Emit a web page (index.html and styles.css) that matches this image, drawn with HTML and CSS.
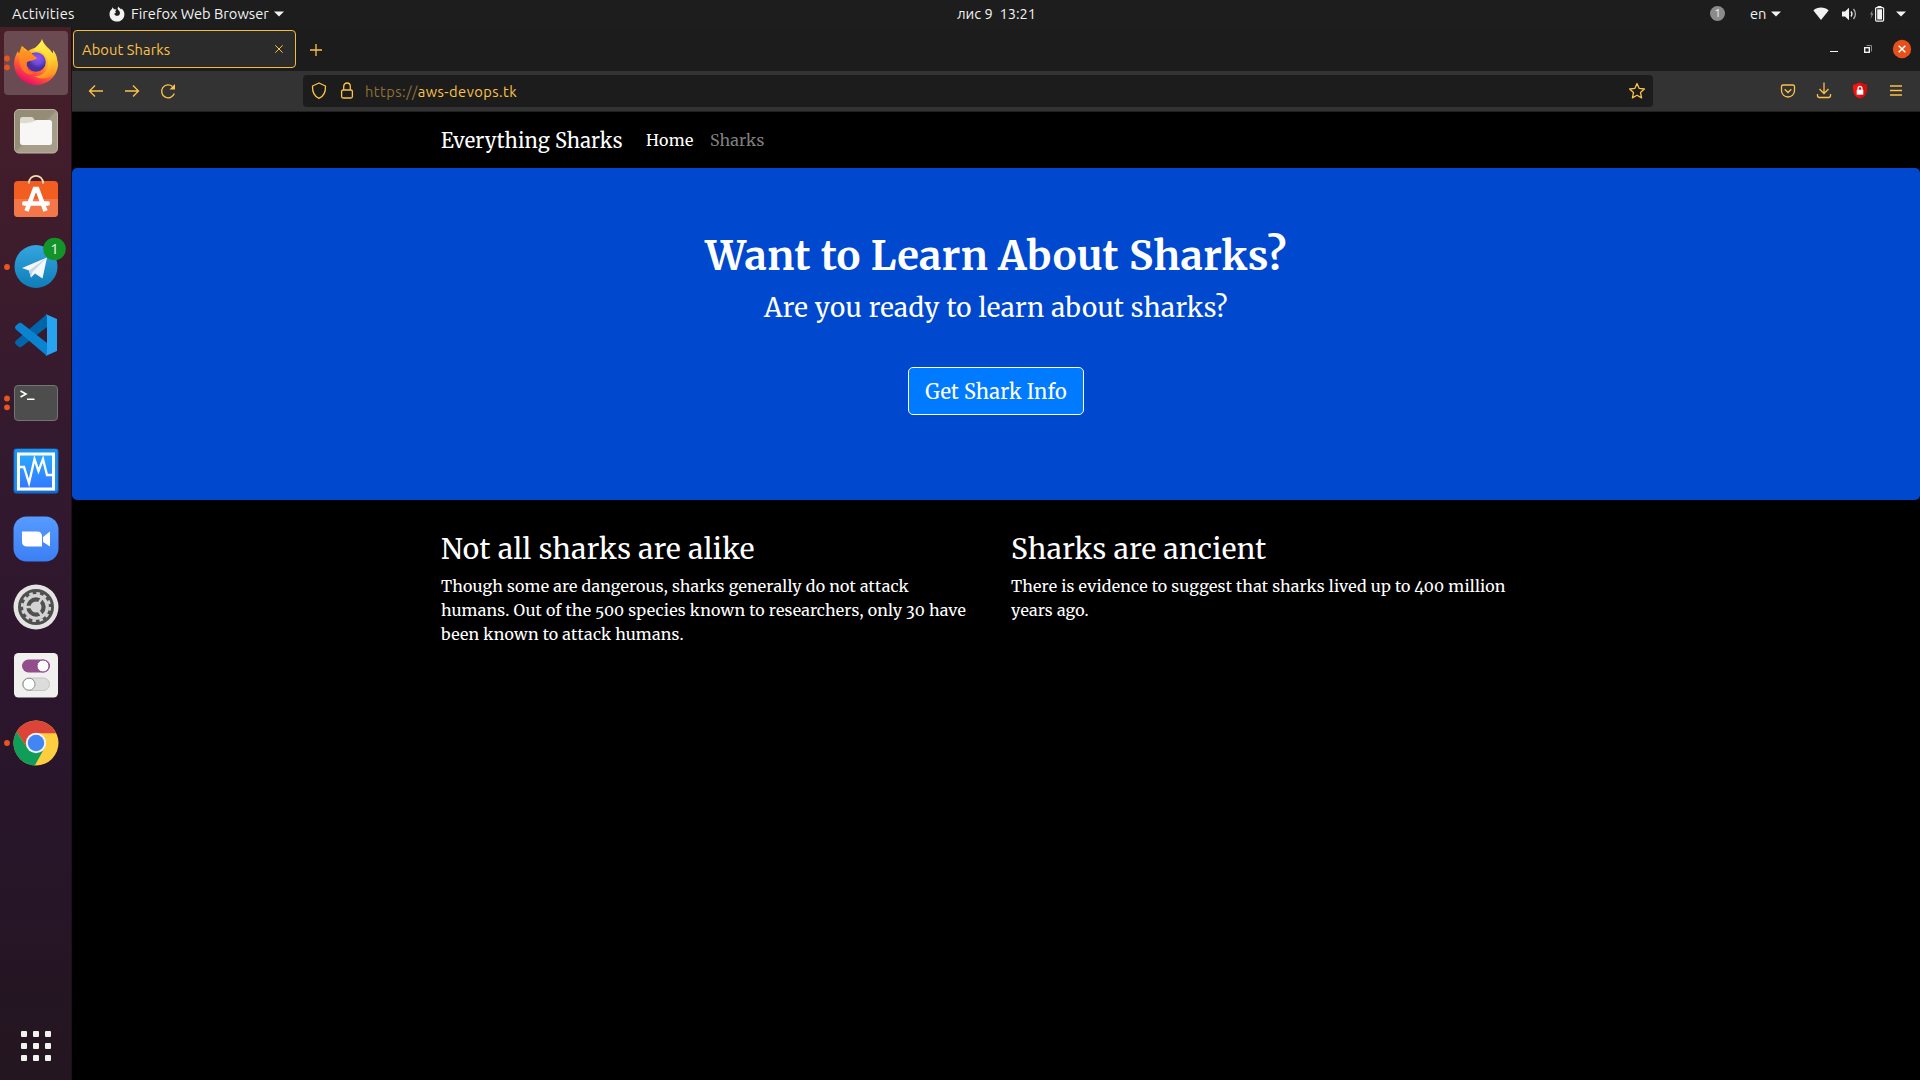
FILE: index.html
```html
<!DOCTYPE html>
<html lang="en">
<head>
<meta charset="utf-8">
<title>About Sharks</title>
<link rel="stylesheet" href="styles.css">
</head>
<body>
<div class="desktop">
  <header class="topbar">
    <span class="activities">Activities</span>
    <svg class="app-icon" width="16" height="16" viewBox="0 0 16 16"><path d="M3.6 1.2 5 3.2 7.6 3.4 6.2 5.2 7 7 5.2 7.4C5.6 10 9.5 10.7 10.7 8.2 11.4 6.600 10.700 5 9.500 4.200L8.600 2.700 9.200 0.500C10 2 11.400 2.200 12.200 3.600L12.700 2.400C14.600 4.200 15.600 6.400 15.400 8.700 15 13 12 15.600 8 15.600 3.800 15.600.5 12.400.5 8.200.5 5.600 1.600 4.200 2.700 3.300Z" fill="#f2f2f2"/></svg>
    <span class="app-name">Firefox Web Browser</span>
    <svg class="caret" width="10" height="6" viewBox="0 0 10 6"><path d="M0 .5h10L5 5.500z" fill="#f2f2f2"/></svg>
    <span class="clock">лис 9&nbsp; 13:21</span>
    <span class="notice">1</span>
    <span class="lang">en</span>
    <svg class="caret lang-caret" width="10" height="6" viewBox="0 0 10 6"><path d="M0 .5h10L5 5.500z" fill="#f2f2f2"/></svg>
    <svg class="wifi" width="16" height="14" viewBox="0 0 16 14"><path d="M.4 3.400C4.500-.3 11.500-.3 15.600 3.400L8 13z" fill="#f2f2f2"/></svg>
    <svg class="sound" width="16" height="14" viewBox="0 0 16 14"><path d="M0 4.500h3L7 .8v12.400L3 9.500H0z" fill="#f2f2f2"/><path d="M9 4.500q2 2.500 0 5" fill="none" stroke="#f2f2f2" stroke-width="1.300"/><path d="M11.500 2q3.800 5 0 10" fill="none" stroke="#b0b0b0" stroke-width="1.300"/></svg>
    <svg class="battery" width="16" height="16" viewBox="0 0 16 16"><path d="M3.500 4 1 8.500h1.500L1.500 13 4.500 7.500H3z" fill="#8b8b8b"/><path d="M8.500 0h4v1.500h-4z" fill="#f2f2f2"/><rect x="6.600" y="1.600" width="8" height="13.500" rx="1" fill="none" stroke="#f2f2f2" stroke-width="1.200"/><path d="M8.200 3.300h4.800v10.200H8.200z" fill="#f2f2f2"/></svg>
    <svg class="caret sys-caret" width="10" height="6" viewBox="0 0 10 6"><path d="M0 .5h10L5 5.500z" fill="#f2f2f2"/></svg>
  </header>

  <div class="workspace">
    <aside class="dock">
      <div class="dock-apps">
        <div class="dock-item">
          <svg viewBox="-36 -34 72 68">
            <defs>
              <linearGradient id="fx-body" x1=".8" y1=".1" x2=".25" y2="1"><stop offset="0" stop-color="#ffe63c"/><stop offset=".35" stop-color="#ffab26"/><stop offset=".65" stop-color="#ff4e3b"/><stop offset="1" stop-color="#e4006f"/></linearGradient>
              <linearGradient id="fx-flame" x1=".4" y1="0" x2=".6" y2="1"><stop offset="0" stop-color="#fff44f"/><stop offset=".55" stop-color="#ffd232"/><stop offset="1" stop-color="#ff8a1c"/></linearGradient>
              <radialGradient id="fx-globe" cx=".6" cy=".3"><stop offset="0" stop-color="#9b50f0"/><stop offset=".6" stop-color="#6b4cdc"/><stop offset="1" stop-color="#4a2fa0"/></radialGradient>
              <linearGradient id="fx-head" x1="0" y1="0" x2="0" y2="1"><stop offset="0" stop-color="#ffa01e"/><stop offset="1" stop-color="#ff6a2a"/></linearGradient>
            </defs>
            <rect x="-32" y="-32" width="64" height="64" rx="4" fill="#fff" fill-opacity=".2"/>
            <path d="M-14-17-8-12C-3-15 5-18 10-14 18-11 22-4 22 2 21 14 11 22 0 22-12 22-22 12-22 0-22-4-20-9-18-12L-17-9Z" fill="url(#fx-body)"/>
            <path d="M6-24C4-18-1-17-2-12 7-14 13-7 12 2 11 10 4 14-2 13 8 19 20 14 21 1 22-5 20-9 17-13L17-9C14-15 8-17 6-24Z" fill="url(#fx-flame)"/>
            <circle cx="0" cy="-1" r="9.800" fill="url(#fx-globe)"/>
            <path d="M-14-17-11-12-6-12-4-9 1-5C-1-2-6-3-9-1-11 5-7 9-2 10-6 14-14 10-16 1-17-6-17-12-14-17Z" fill="url(#fx-head)"/>
            <g fill="#e95420"><circle cx="-29" cy="-4.500" r="2.900"/><circle cx="-29" cy="4.300" r="2.900"/></g>
          </svg>
        </div>
        <div class="dock-item">
          <svg viewBox="-36 -34 72 68">
            <defs><linearGradient id="files-bg" x1="0" y1="0" x2="1" y2="1"><stop offset=".48" stop-color="#958c78"/><stop offset=".52" stop-color="#a69e8a"/></linearGradient></defs>
            <rect x="-21.500" y="-21.500" width="43" height="43.500" rx="4.500" fill="url(#files-bg)" stroke="#bdb6a5"/>
            <path d="M-16-11.500q0-2.500 2.500-2.500h9q2 0 3 3v4h-14.500z" fill="#dedace"/>
            <path d="M-16-8q9 .5 12.500-1 2-2 4-2h13q2.500 0 2.500 2.500v20q0 2.500-2.500 2.500h-27q-2.500 0-2.500-2.500z" fill="#f8f7f6"/>
          </svg>
        </div>
        <div class="dock-item">
          <svg viewBox="-36 -34 72 68">
            <path d="M-7-16c0-9.500 14-9.500 14 0" fill="none" stroke="#f7d9b3" stroke-width="1.800"/>
            <rect x="-22" y="-18" width="44" height="36" rx="4" fill="#f25e22"/>
            <path d="M-22 0h44v14q0 4-4 4h-36q-4 0-4-4z" fill="#f4774a"/>
            <path d="M-7-18v2.500M7-18v2.500" stroke="#fbe3c5" stroke-width="1.800"/>
            <path d="M-9.500 12 -1.200-10h2.400L9.500 12" fill="none" stroke="#fff" stroke-width="4.500"/>
            <rect x="-14" y="2.200" width="28" height="4.600" rx="2.300" fill="#fff"/>
          </svg>
        </div>
        <div class="dock-item">
          <svg viewBox="-36 -34 72 68">
            <defs><linearGradient id="tg" x2="0" y2="1"><stop offset="0" stop-color="#35a5df"/><stop offset="1" stop-color="#0e7db8"/></linearGradient></defs>
            <circle cx="0" cy="-.5" r="21.500" fill="url(#tg)"/>
            <path d="M-14 1 11-9.500 6.500 11.500-1 6.500-5 10.500-7 3.500z" fill="#f4f8fc"/><path d="M-7 3.500 11-9.500-3.500 5-5 10.500z" fill="#c6d7e8"/>
            <circle cx="18.500" cy="-18" r="11.300" fill="#129429"/>
            <text x="18.500" y="-13" class="badge-text">1</text>
            <circle cx="-29" cy="0" r="2.900" fill="#e95420"/>
          </svg>
        </div>
        <div class="dock-item">
          <svg viewBox="-36 -34 72 68">
            <path d="M-20 5.500q-2 2 0 4l3 2.500q1.500.8 3-.5L11-8v-13z" fill="#0065a9"/>
            <path d="M-20-5.500q-2-2 0-4l3-2.500q1.500-.8 3 .5L11 8v13z" fill="#0a84d0"/>
            <path d="M9.500-21 21-16v32L9.500 21Q11 20 11 18v-36Q11-20 9.500-21z" fill="#27a3f0"/>
          </svg>
        </div>
        <div class="dock-item">
          <svg viewBox="-36 -34 72 68">
            <rect x="-21.500" y="-17.500" width="43" height="35" rx="3.500" fill="#4d4d4d" stroke="#747474"/>
            <path d="M-15.500-12-10-9-15.500-6M-9-3.800h7.500" fill="none" stroke="#fff" stroke-width="1.600"/>
            <g fill="#e95420"><circle cx="-29" cy="-4.500" r="2.900"/><circle cx="-29" cy="4.300" r="2.900"/></g>
          </svg>
        </div>
        <div class="dock-item">
          <svg viewBox="-36 -34 72 68">
            <defs><linearGradient id="vm" x2="0" y2="1"><stop offset="0" stop-color="#29abff"/><stop offset="1" stop-color="#3577ff"/></linearGradient></defs>
            <rect x="-22.500" y="-22.500" width="45" height="45" rx="3" fill="#1668cf"/>
            <rect x="-21.500" y="-22" width="43" height="42" rx="2" fill="#1c93ec"/>
            <rect x="-17.500" y="-17" width="35" height="35" fill="url(#vm)" stroke="#fff" stroke-width="3"/>
            <path d="M-17-4h5L-7 12-1.500-12 2.500 0 7-12 11 4h6" fill="none" stroke="#fff" stroke-width="2.300"/>
          </svg>
        </div>
        <div class="dock-item">
          <svg viewBox="-36 -34 72 68">
            <defs><linearGradient id="zm" x2="0" y2="1"><stop offset="0" stop-color="#569bff"/><stop offset="1" stop-color="#3b7ff5"/></linearGradient></defs>
            <rect x="-22.500" y="-22.500" width="45" height="45" rx="13" fill="url(#zm)"/>
            <path d="M-14-7.500h15q5 0 5 5v10h-15q-5 0-5-5z" fill="#fff"/><path d="M7-2 14-7.500v15L7 3z" fill="#fff"/>
          </svg>
        </div>
        <div class="dock-item">
          <svg viewBox="-36 -34 72 68">
            <circle r="22.500" fill="#e4e4e2"/><circle r="18" fill="#505050"/>
            <circle r="13.800" fill="none" stroke="#d3d3d3" stroke-width="2.600" stroke-dasharray="3.610 3.610"/>
            <circle r="11.300" fill="none" stroke="#d3d3d3" stroke-width="3.200"/>
            <circle r="5.500" fill="#d3d3d3"/>
            <path d="M-10 0H0L6-9M0 0 6 9" fill="none" stroke="#d3d3d3" stroke-width="2.400"/>
          </svg>
        </div>
        <div class="dock-item">
          <svg viewBox="-36 -34 72 68">
            <rect x="-22" y="-22" width="44" height="44.500" rx="4.500" fill="#f0f0ee"/>
            <rect x="-14" y="-15.500" width="28" height="13" rx="6.500" fill="#924d8b"/><circle cx="7" cy="-9" r="6" fill="#fff" stroke="#924d8b"/>
            <rect x="-13.500" y="3" width="27" height="12.500" rx="6.200" fill="#dcdcdc" stroke="#c4c4c4"/><circle cx="-7" cy="9.200" r="6" fill="#fff" stroke="#909090"/>
          </svg>
        </div>
        <div class="dock-item">
          <svg viewBox="-36 -34 72 68">
            <circle r="22.500" fill="#fecd40"/>
            <path d="M-19.500-11.200A22.500 22.500 0 0 1 20.300-9.800H0L-8.500 4.900z" fill="#dc4437"/>
            <path d="M-19.500-11.200A22.500 22.500 0 0 0-1.200 22.500L8.500 4.900 0 9.800-8.500 4.900z" fill="#109d58"/>
            <circle r="10.200" fill="#f1f3f4"/><circle r="8.200" fill="#4285f4"/>
            <circle cx="-29" cy="0" r="2.900" fill="#e95420"/>
          </svg>
        </div>
      </div>
      <div class="app-grid"><i></i><i></i><i></i><i></i><i></i><i></i><i></i><i></i><i></i></div>
    </aside>

    <main class="browser">
      <div class="tabs">
        <div class="tab"><span>About Sharks</span><svg width="8" height="8" viewBox="0 0 8 8"><path d="m.3.300 7.400 7.400m0-7.400-7.400 7.400"/></svg></div>
        <svg class="new-tab" width="12" height="12" viewBox="0 0 12 12"><path d="M6 0v12M0 6h12" stroke-width="1.300"/></svg>
        <div class="window-controls">
          <svg width="102" height="20" viewBox="1820 39 102 20"><path d="M1830 51.500h8" stroke="#f2f2f2"/><path d="M1866.500 45.500h5v6" stroke="#8b8b8b" fill="none"/><rect x="1864.700" y="47.700" width="4.600" height="4.600" fill="none" stroke="#f2f2f2" stroke-width="1.400"/><circle cx="1902" cy="49" r="9.200" fill="#e5501b" stroke="none"/><path d="m1898.700 45.700 6.600 6.600m0-6.600-6.600 6.600" stroke="#fff" stroke-width="1.500"/></svg>
        </div>
      </div>
      <div class="toolbar">
        <svg class="tool" viewBox="-18 -18 36 36"><path d="M-6.500 0H7M-1-5.500-6.500 0-1 5.500"/></svg>
        <svg class="tool" viewBox="-18 -18 36 36"><path d="M-7 0H6.500M1-5.500 6.500 0 1 5.500"/></svg>
        <svg class="tool" viewBox="-18 -18 36 36"><path d="M4.500-4.500A6.500 6.500 0 1 0 6.300 2.500"/><path d="M7-7v5.500H1.500z" fill="#fcc24a" stroke="none"/></svg>
        <div class="urlbar">
          <svg class="shield" width="16" height="18" viewBox="0 0 16 18"><path d="M8 1 14.500 4C14.700 10 12.500 14.500 8 16.300 3.500 14.500 1.300 10 1.500 4Z" stroke-linejoin="round"/></svg>
          <svg class="lock" width="14" height="18" viewBox="0 0 14 18"><rect x="1.600" y="8" width="10.800" height="8" rx="1.500"/><path d="M3.700 8V4.500a3.300 3.500 0 0 1 6.600 0V8"/></svg>
          <span class="url"><span class="scheme">https://</span>aws-devops.tk</span>
          <svg class="star" width="18" height="18" viewBox="0 0 18 18"><path d="m9 1.500 2.200 4.900 5.200.6-3.900 3.600 1.100 5.300L9 13.300l-4.600 2.600 1.100-5.300L1.600 7l5.200-.6z" stroke-linejoin="round"/></svg>
        </div>
        <div class="tools-right">
          <svg class="tool" viewBox="-18 -18 36 36"><path d="M-5-6H5q1.500 0 1.500 1.500V-.5a6.500 6.500 0 0 1-13 0v-4Q-6.500-6-5-6zM-3.300-1.800 0 1.500 3.300-1.800"/></svg>
          <svg class="tool" viewBox="-18 -18 36 36"><path d="M0-8.500v11M-4.500-2 0 2.500 4.500-2M-6.500 3v1.500q0 2 2 2h9q2 0 2-2V3"/></svg>
          <svg class="tool" viewBox="-18 -18 36 36"><path d="M0-8.500 7-6C7.500 2 5 6 0 7.500-5 6-7.500 2-7-6Z" fill="#fb1010" stroke="none"/><path d="M0-8.500 7-6C7.500 2 5 6 0 7.500z" fill="#d80b0b" stroke="none"/><rect x="-3.300" y="-1.300" width="6.600" height="5" fill="#fff" stroke="none"/><path d="M-1.900-1v-1.500a1.900 2 0 0 1 3.800 0V-1" stroke="#fff"/></svg>
          <svg class="tool" viewBox="-18 -18 36 36"><path d="M-6-5H6M-6-.5H6M-6 4H6"/></svg>
        </div>
      </div>

      <div class="page">
        <nav class="navbar"><a class="brand">Everything Sharks</a><a class="nav-link active">Home</a><a class="nav-link">Sharks</a></nav>
        <section class="jumbotron">
          <h1>Want to Learn About Sharks?</h1>
          <p>Are you ready to learn about sharks?</p>
          <a class="btn">Get Shark Info</a>
        </section>
        <section class="facts">
          <article><h3>Not all sharks are alike</h3><p>Though some are dangerous, sharks generally do not attack humans. Out of the 500 species known to researchers, only 30 have been known to attack humans.</p></article>
          <article><h3>Sharks are ancient</h3><p>There is evidence to suggest that sharks lived up to 400 million years ago.</p></article>
        </section>
      </div>
    </main>
  </div>
</div>
</body>
</html>
```
FILE: styles.css
```css
* { box-sizing: border-box; }
body { margin: 0; background: #000; font-family: Ubuntu, "Noto Sans", sans-serif; }
svg { display: block; flex: none; }
h1, h3, p { margin: 0; }

.desktop { display: flex; flex-direction: column; width: 1920px; height: 1080px; overflow: hidden; }

/* GNOME top bar */
.topbar { display: flex; align-items: center; height: 27px; flex: none; background: #1d1d1d; color: #f2f2f2; font-size: 14.670px; line-height: 27px; white-space: nowrap; }
.activities { width: 97px; padding-left: 12px; letter-spacing: .25px; }
.app-icon { margin-left: 12px; }
.app-name { width: 143px; margin-left: 6px; }
.clock { width: 760px; margin-left: 673px; }
.notice { width: 15px; height: 15px; margin-left: -7px; border-radius: 50%; background: #8b8b8b; font-size: 11px; line-height: 15px; text-align: center; }
.lang { width: 21px; margin-left: 25px; }
.wifi { margin-left: 32px; }
.sound { margin-left: 13px; }
.battery { margin-left: 11px; }
.sys-caret { margin-left: 11px; }

.workspace { display: flex; flex: 1; min-height: 0; }

/* Dock */
.dock { display: flex; flex-direction: column; justify-content: space-between; width: 72px; flex: none; padding: 2px 0 19px; border-right: 1px solid #1d1018; background: linear-gradient(#471f26 0, #421d2b 12%, #351a2e 36%, #2d162e 60%, #271529 78%, #241620 100%); }
.dock-item { width: 72px; height: 68px; }
.dock-item svg { width: 72px; height: 68px; }
.badge-text { fill: #fff; font-size: 14px; text-anchor: middle; }
.app-grid { display: grid; grid-template-columns: repeat(3, 6px); gap: 6px; margin-left: 21px; }
.app-grid i { height: 6px; border-radius: 1px; background: #f2f2ee; }

/* Browser chrome */
.browser { flex: 1; display: flex; flex-direction: column; min-width: 0; color: #fcc24a; }
.browser svg { stroke: #fcc24a; fill: none; }
.tabs { display: flex; align-items: center; height: 44px; background: #1c1c1c; }
.tab { display: flex; align-items: center; justify-content: space-between; width: 223px; height: 38px; margin-left: 1px; padding: 0 12px 0 8px; border: 1px solid #f5bc42; border-radius: 4px; background: #2b2b2b; font-size: 14.670px; letter-spacing: .1px; }
.new-tab { margin: 1px 0 0 14px; }
.window-controls { margin-left: auto; margin-right: -2px; }
.toolbar { display: flex; align-items: center; height: 41px; padding: 0 6px; background: #333; border-bottom: 1px solid #202020; }
.tool { width: 36px; height: 36px; stroke-width: 1.300; }
.urlbar { display: flex; align-items: center; width: 1350px; height: 32px; margin-left: 117px; padding: 0 7px 0 8px; border-radius: 4px; background: #1c1c1c; }
.urlbar svg { stroke-width: 1.300; }
.lock { margin-left: 13px; }
.url { margin-left: 11px; font-size: 14.670px; letter-spacing: .45px; }
.scheme { color: #8f7035; }
.star { margin-left: auto; }
.tools-right { display: flex; margin-left: auto; }

/* Page */
.page { flex: 1; background: #000; color: #fff; font-family: Merriweather, "DejaVu Serif Condensed", serif; font-size: 16px; line-height: 24px; letter-spacing: .19px; font-variant-numeric: oldstyle-nums; }
.navbar { display: flex; align-items: center; height: 56px; padding-left: 369px; }
.brand { width: 205px; padding-top: 2px; font-size: 20px; letter-spacing: .17px; }
.nav-link { width: 64px; color: #7f7f7f; }
.nav-link.active { color: #fff; letter-spacing: .4px; }
.jumbotron { display: flex; flex-direction: column; align-items: center; height: 332px; padding-top: 64px; border-radius: 5px; background: #0048cd; }
.jumbotron h1 { font-size: 40px; line-height: 48px; font-weight: 700; letter-spacing: .42px; }
.jumbotron p { margin-top: 8px; font-size: 26px; line-height: 39px; letter-spacing: .36px; }
.btn { width: 176px; height: 48px; margin-top: 40px; border: 1px solid #fff; border-radius: 5px; background: #007bff; font-size: 20px; line-height: 48px; text-align: center; }
.facts { display: grid; grid-template-columns: 540px 540px; column-gap: 30px; padding: 33px 0 0 369px; }
.facts h3 { font-size: 28px; line-height: 33.600px; font-weight: 400; letter-spacing: .4px; margin-bottom: 7px; }
```
